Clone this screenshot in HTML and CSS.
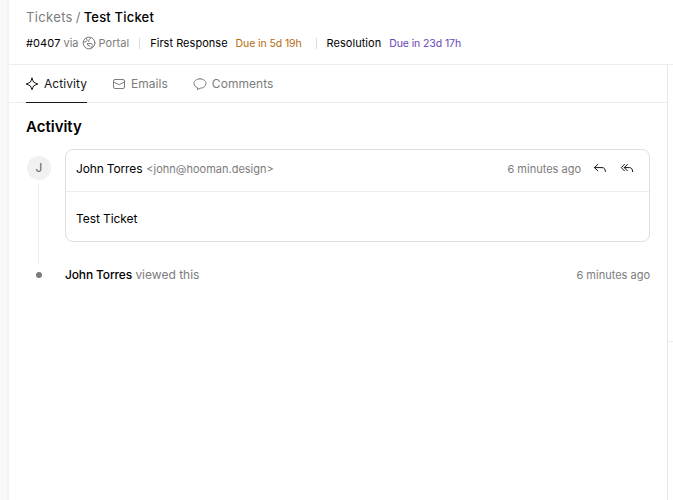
FILE: index.html
```html
<!DOCTYPE html>
<html lang="en">
<head>
  <meta charset="UTF-8">
  <title>Test Ticket</title>
  <link rel="stylesheet" href="styles.css">
</head>
<body>
  <div class="app">
    <div class="sidebar"></div>
    <div class="page">
      <header class="header">
        <div class="breadcrumbs">
          <span class="crumb">Tickets</span>
          <span class="slash">/</span>
          <span class="current">Test Ticket</span>
        </div>
        <div class="meta">
          <span class="ticket-id">#0407</span>
          <span class="via">via</span>
          <svg class="globe" viewBox="0 0 14 14">
            <circle cx="7" cy="7" r="5.9"/>
            <path d="M4.2 2.2 L5.2 4.3 L4 5.8 L1.4 6 M9 1.6 L7.2 3.6 L6.6 5.4 M5.6 7.4 L9.6 7.6 L10.6 9.4 L8.8 12.2 M5.6 7.4 L5.8 9.2 L8 10.2"/>
          </svg>
          <span class="portal">Portal</span>
          <span class="divider"></span>
          <span class="label">First Response</span>
          <span class="due orange">Due in 5d 19h</span>
          <span class="divider second"></span>
          <span class="label">Resolution</span>
          <span class="due violet">Due in 23d 17h</span>
        </div>
      </header>
      <div class="content">
        <main class="main">
          <nav class="tabs">
            <div class="tab active">
              <svg viewBox="0 0 14 14">
                <path d="M7 1.2 C7.5 2.4 7.8 3.9 8.6 5.1 C9.8 5.9 11.4 6.4 12.8 7 C11.4 7.6 9.8 8.1 8.6 8.9 C7.8 10.1 7.5 11.6 7 12.8 C6.5 11.6 6.2 10.1 5.4 8.9 C4.2 8.1 2.6 7.6 1.2 7 C2.6 6.4 4.2 5.9 5.4 5.1 C6.2 3.9 6.5 2.4 7 1.2 Z"/>
              </svg>
              <span>Activity</span>
            </div>
            <div class="tab">
              <svg viewBox="0 0 14 14">
                <rect x="1.5" y="2.5" width="11" height="9" rx="1.5"/>
                <path d="M1.8 5.2 L6.2 7.3 Q7 7.7 7.8 7.3 L12.2 5.2"/>
              </svg>
              <span>Emails</span>
            </div>
            <div class="tab">
              <svg viewBox="0 0 14 14">
                <path d="M7 1.8 C10.4 1.8 13 3.8 13 6.5 C13 9.2 10.4 11.2 7.3 11.2 L4.4 12.7 L4.4 10.6 C2.3 9.9 1 8.4 1 6.5 C1 3.8 3.6 1.8 7 1.8 Z"/>
              </svg>
              <span>Comments</span>
            </div>
          </nav>
          <h1 class="title">Activity</h1>
          <div class="activity">
            <div class="rail">
              <div class="avatar">J</div>
              <div class="line"></div>
            </div>
            <div class="email-card">
              <div class="email-header">
                <span class="sender">John Torres</span>
                <span class="address">&lt;john@hooman.design&gt;</span>
                <span class="time">6 minutes ago</span>
                <svg class="reply" viewBox="0 0 14 14">
                  <path d="M4.8 2.4 L1.5 5.6 L4.8 8.8 M1.5 5.6 H9 Q12.4 5.6 12.4 9.6"/>
                </svg>
                <svg class="reply-all" viewBox="0 0 14 14">
                  <path d="M4.4 2.4 L1.3 5.6 L4.4 8.8 M7.4 2.4 L4.3 5.6 L7.4 8.8 M4.3 5.6 H9.4 Q12.6 5.6 12.6 9.6"/>
                </svg>
              </div>
              <div class="email-body">Test Ticket</div>
            </div>
          </div>
          <div class="event">
            <div class="dot-col"><span class="dot"></span></div>
            <div class="event-text"><span class="name">John Torres</span> viewed this</div>
            <span class="time">6 minutes ago</span>
          </div>
        </main>
        <aside class="side">
          <div class="side-top"></div>
        </aside>
      </div>
    </div>
  </div>
</body>
</html>
```
FILE: styles.css
```css
* {
  box-sizing: border-box;
}
body {
  margin: 0;
  font-family: Inter, "Liberation Sans", sans-serif;
  font-size: 12px;
  line-height: 16px;
  color: #171717;
  background: #fff;
}
svg {
  width: 14px;
  height: 14px;
  flex: none;
  fill: none;
  stroke: currentColor;
  stroke-width: 1;
  stroke-linecap: round;
  stroke-linejoin: round;
}
span {
  white-space: nowrap;
}
.app {
  display: flex;
  height: 500px;
  overflow: hidden;
}
.sidebar {
  width: 9px;
  flex: none;
  background: #f8f8f8;
  border-right: 2px solid #f3f3f3;
}
.page {
  flex: 1;
  display: flex;
  flex-direction: column;
}
.header {
  height: 65px;
  padding: 8px 0 0 17px;
  border-bottom: 1px solid #ededed;
}
.breadcrumbs {
  display: flex;
  font-size: 13px;
  line-height: 18px;
  letter-spacing: 0.18px;
  color: #7c7c7c;
}
.crumb {
  letter-spacing: 0.35px;
}
.slash {
  margin: 0 3px;
}
.current {
  color: #000;
  font-weight: 500;
}
.meta {
  display: flex;
  align-items: center;
  height: 16px;
  margin-top: 9px;
  font-size: 11px;
  color: #7c7c7c;
}
.ticket-id {
  color: #000;
  letter-spacing: 0.1px;
}
.via {
  margin-left: 3px;
}
.globe {
  margin: 0 3px;
}
.portal {
  letter-spacing: 0.05px;
}
.divider {
  width: 1px;
  height: 11px;
  margin: 0 10px;
  background: #dcdcdc;
}
.second {
  margin-left: 14px;
}
.label {
  color: #000;
  letter-spacing: 0.03px;
}
.due {
  margin-left: 8px;
  padding-top: 2px;
  font-size: 10.5px;
  letter-spacing: -0.1px;
}
.orange {
  color: #b8690f;
}
.violet {
  color: #6846b8;
}
.content {
  flex: 1;
  display: flex;
}
.main {
  width: 658px;
}
.tabs {
  display: flex;
  height: 38px;
  padding-left: 17px;
  gap: 26px;
  border-bottom: 1px solid #ededed;
}
.tab {
  display: flex;
  align-items: center;
  gap: 4px;
  height: 38px;
  font-size: 12px;
  letter-spacing: 0.05px;
  color: #7c7c7c;
}
.tab svg {
  margin-left: -1px;
  margin-right: 1px;
}
.tab.active {
  color: #171717;
  border-bottom: 1px solid #171717;
}
.title {
  margin: 14px 0 0 17px;
  font-size: 15px;
  line-height: 20px;
  font-weight: 600;
  color: #000;
}
.activity {
  display: flex;
  margin-top: 12px;
  padding: 0 17px;
}
.rail {
  width: 39px;
  height: 115px;
}
.avatar {
  width: 24px;
  height: 24px;
  margin: 7px 0 0 1px;
  border-radius: 50%;
  background: #f1f1f1;
  color: #636363;
  line-height: 24px;
  text-align: center;
}
.line {
  width: 1px;
  height: 81px;
  margin: 3px 0 0 12px;
  background: #ededed;
}
.email-card {
  flex: 1;
  height: 93px;
  border: 1px solid #dfdfdf;
  border-radius: 8px;
}
.email-header {
  display: flex;
  align-items: center;
  height: 42px;
  padding: 0 15px 3px 10px;
  border-bottom: 1px solid #ededed;
}
.sender {
  color: #000;
  letter-spacing: -0.15px;
}
.name {
  color: #000;
  font-weight: 500;
  letter-spacing: -0.15px;
}
.address {
  margin-left: 4px;
  font-size: 11px;
  color: #7c7c7c;
}
.time {
  margin-left: auto;
  font-size: 11px;
  color: #7c7c7c;
}
.reply {
  margin-left: 12px;
}
.reply-all {
  margin-left: 13px;
}
.email-body {
  padding: 19px 10px;
  color: #000;
  letter-spacing: -0.08px;
}
.event {
  display: flex;
  align-items: center;
  padding: 3px 17px 0;
  color: #7c7c7c;
}
.dot-col {
  width: 39px;
}
.dot {
  display: block;
  width: 6px;
  height: 6px;
  margin: -1px 0 0 10px;
  border-radius: 50%;
  background: #7c7c7c;
}
.side {
  flex: 1;
  border-left: 1px solid #e8e8e8;
}
.side-top {
  height: 277px;
  border-bottom: 1px solid #ededed;
}
```
